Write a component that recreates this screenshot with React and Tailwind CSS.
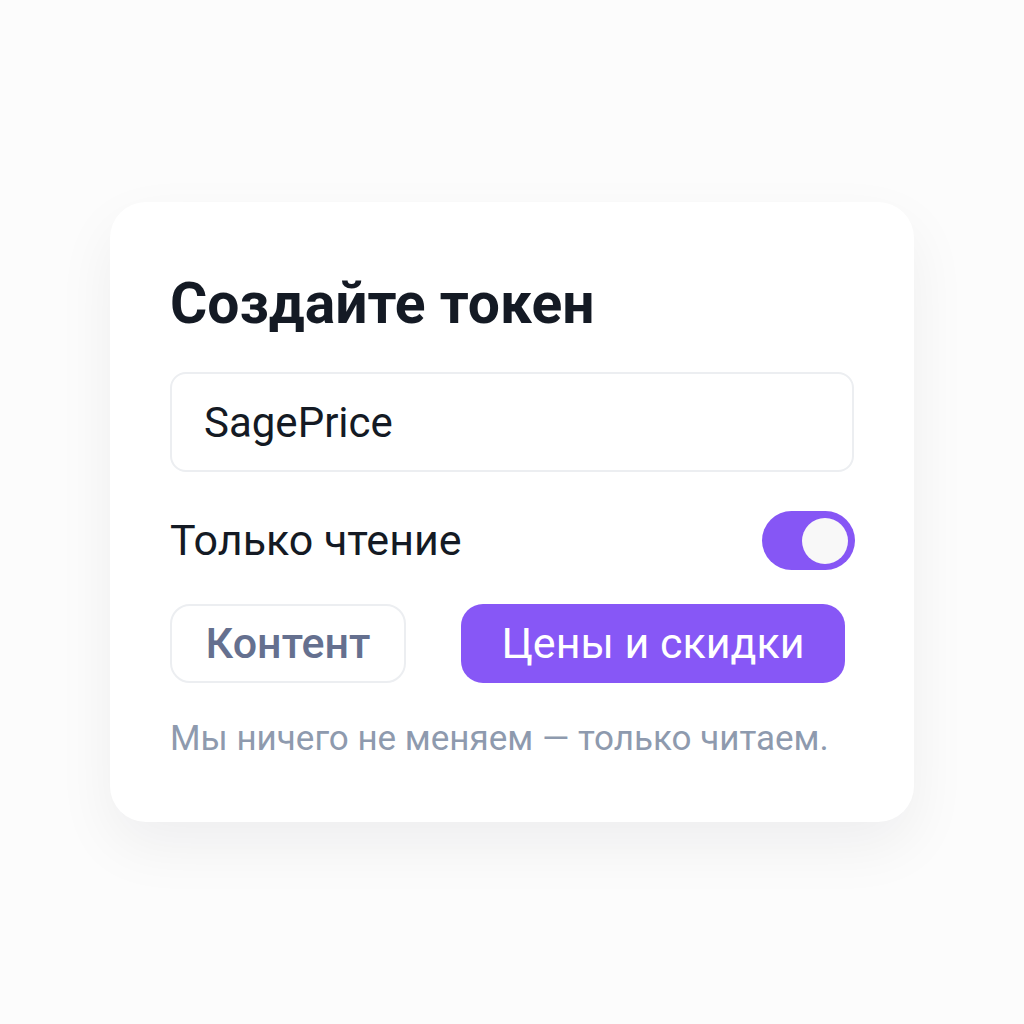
export default function App() {
  return (
    <div className="min-h-screen w-full bg-[#fcfcfc] pt-[202px]" style={{ fontFamily: 'Roboto, "Noto Sans", sans-serif' }}>
      <div className="ml-[110px] w-[804px] rounded-[36px] bg-white px-[60px] pt-[70px] pb-[61px] shadow-[0_24px_60px_rgba(15,23,42,0.06)]">
        <h1 className="text-[57px] font-bold leading-[64px] text-[#141a24]">Создайте токен</h1>
        <div className="mt-[36px] flex h-[100px] items-center rounded-[16px] border-2 border-[#eceef1] px-[32px] text-[42px] text-[#141a24]">
          SagePrice
        </div>
        <div className="mt-[39px] flex h-[59px] items-center justify-between">
          <span className="text-[43px] text-[#141a24]">Только чтение</span>
          <div className="mr-[-1px] flex h-[59px] w-[93px] items-center justify-end rounded-full bg-[#8656f5] pr-[7px]">
            <div className="h-[46px] w-[46px] rounded-full bg-[#f8f8f8]" />
          </div>
        </div>
        <div className="mt-[34px] flex h-[79px] items-stretch gap-[55px]">
          <div className="flex w-[236px] items-center justify-center rounded-[20px] border-2 border-[#eceef1] text-[43px] font-medium text-[#65708f]">
            Контент
          </div>
          <div className="flex w-[384px] items-center justify-center rounded-[22px] bg-[#8757f6] text-[43px] font-normal text-white">
            Цены и скидки
          </div>
        </div>
        <p className="mt-[34px] whitespace-nowrap text-[35px] leading-[44px] text-[#8e9aae]">Мы ничего не меняем — только читаем.</p>
      </div>
    </div>
  );
}
